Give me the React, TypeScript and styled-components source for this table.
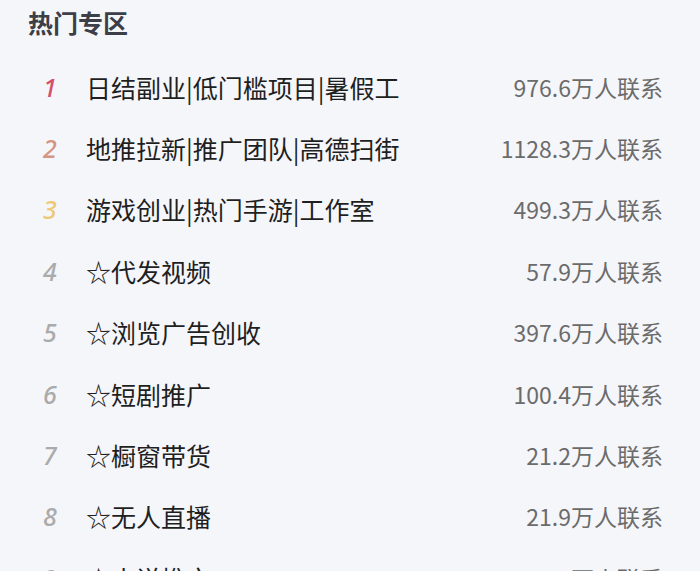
import styled, { createGlobalStyle } from 'styled-components';

const items = [
  { name: '日结副业|低门槛项目|暑假工', count: '976.6' },
  { name: '地推拉新|推广团队|高德扫街', count: '1128.3' },
  { name: '游戏创业|热门手游|工作室', count: '499.3' },
  { name: '☆代发视频', count: '57.9' },
  { name: '☆浏览广告创收', count: '397.6' },
  { name: '☆短剧推广', count: '100.4' },
  { name: '☆橱窗带货', count: '21.2' },
  { name: '☆无人直播', count: '21.9' },
  { name: '☆小说推文', count: '19.6' },
];

const rankColors = ['#d6506a', '#d49584', '#eec874'];

export default function App() {
  return (
    <>
      <GlobalStyle />
      <Page>
        <Title>热门专区</Title>
        <List>
          {items.map((item, i) => (
            <Row key={i}>
              <Rank color={rankColors[i] || '#ababab'}>{i + 1}</Rank>
              <Name>{item.name}</Name>
              <Count>{item.count}万人联系</Count>
            </Row>
          ))}
        </List>
      </Page>
    </>
  );
}

const GlobalStyle = createGlobalStyle`
  html, body {
    margin: 0;
    padding: 0;
    background: #f5f6fa;
    overflow: hidden;
  }
  body {
    font-family: 'Noto Sans CJK SC', 'Noto Sans', sans-serif;
  }
`;

const Page = styled.div`
  width: 700px;
  height: 571px;
  overflow: hidden;
  padding: 0 37px 0 28px;
  box-sizing: border-box;
  background: #f5f6fa;
`;

const Title = styled.div`
  height: 44px;
  line-height: 44px;
  font-size: 25px;
  font-weight: 700;
  color: #3c3f48;
  margin-bottom: 12px;
`;

const List = styled.div`
  display: flex;
  flex-direction: column;
`;

const Row = styled.div`
  display: flex;
  align-items: center;
  height: 61.4px;
  flex-shrink: 0;
`;

const Rank = styled.div<{ color: string }>`
  width: 58px;
  padding-left: 15px;
  box-sizing: border-box;
  font-family: 'Noto Sans', sans-serif;
  font-size: 25px;
  font-style: italic;
  font-weight: 500;
  color: ${(p) => p.color};
`;

const Name = styled.div`
  flex: 1;
  font-size: 25px;
  color: #1f1f1f;
  white-space: nowrap;
`;

const Count = styled.div`
  font-size: 23px;
  color: #6b6b6b;
  white-space: nowrap;
`;
